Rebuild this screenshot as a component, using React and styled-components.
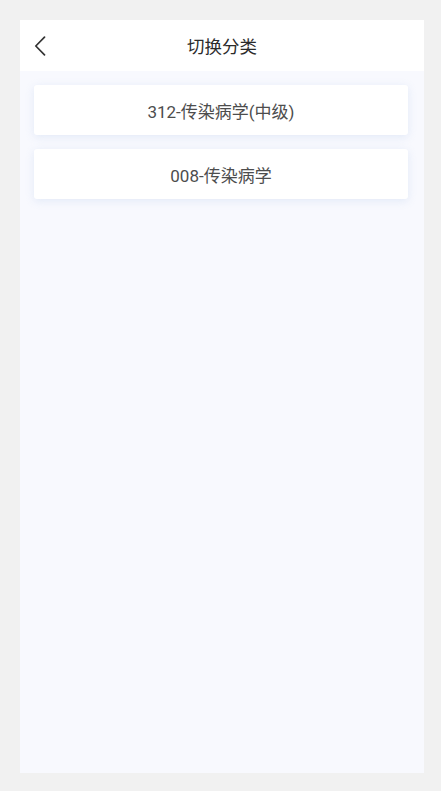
import React from 'react';
import styled, { createGlobalStyle } from 'styled-components';

const GlobalStyle = createGlobalStyle`
  html, body {
    margin: 0;
    padding: 0;
    background: #f1f1f1;
  }
  body {
    font-family: Roboto, "Noto Sans CJK SC", sans-serif;
  }
`;

const Outer = styled.div`
  padding: 20px 17px 18px 20px;
  box-sizing: border-box;
  height: 791px;
`;

const Screen = styled.div`
  height: 100%;
  background: #f8f9fe;
  display: flex;
  flex-direction: column;
`;

const Header = styled.div`
  height: 51px;
  background: #ffffff;
  display: flex;
  align-items: center;
  justify-content: center;
  position: relative;
`;

const BackButton = styled.button`
  position: absolute;
  left: 10px;
  top: 50%;
  transform: translateY(-50%);
  border: none;
  background: none;
  padding: 0;
  width: 20px;
  height: 24px;
  display: flex;
  align-items: center;
  justify-content: center;
  cursor: pointer;
`;

const Title = styled.h1`
  margin: 0;
  font-size: 17.5px;
  font-weight: 400;
  color: #2b2b2b;
`;

const List = styled.div`
  display: flex;
  flex-direction: column;
  gap: 14px;
  padding: 14px 16px 0 14px;
`;

const Card = styled.div`
  height: 50px;
  background: #ffffff;
  border-radius: 3px;
  box-shadow: 0 2px 8px rgba(200, 215, 240, 0.45);
  display: flex;
  align-items: center;
  justify-content: center;
  font-size: 17px;
  color: #4d4d4d;
  cursor: pointer;
`;

const categories = ['312-传染病学(中级)', '008-传染病学'];

const App = () => (
  <>
    <GlobalStyle />
    <Outer>
      <Screen>
        <Header>
          <BackButton aria-label="返回">
            <svg width="12" height="20" viewBox="0 0 12 20" fill="none">
              <path d="M10.5 1.2 L1.8 10 L10.5 18.8" stroke="#333" strokeWidth="1.7" strokeLinecap="round" strokeLinejoin="round" />
            </svg>
          </BackButton>
          <Title>切换分类</Title>
        </Header>
        <List>
          {categories.map((name) => (
            <Card key={name}>{name}</Card>
          ))}
        </List>
      </Screen>
    </Outer>
  </>
);

export default App;
